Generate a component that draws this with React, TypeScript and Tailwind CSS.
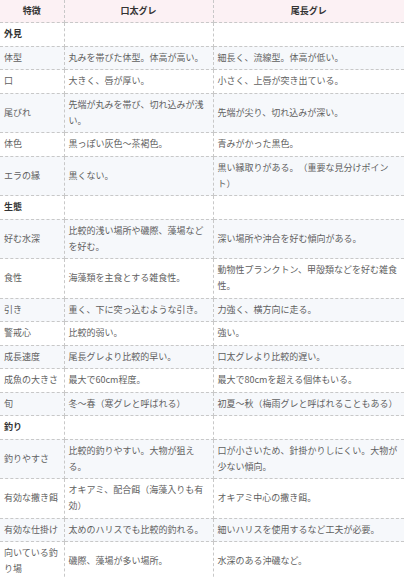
type Row = { label: string; a?: string; b?: string; section?: boolean };

const rows: Row[] = [
  { label: '外見', section: true },
  { label: '体型', a: '丸みを帯びた体型。体高が高い。', b: '細長く、流線型。体高が低い。' },
  { label: '口', a: '大きく、唇が厚い。', b: '小さく、上唇が突き出ている。' },
  { label: '尾びれ', a: '先端が丸みを帯び、切れ込みが浅い。', b: '先端が尖り、切れ込みが深い。' },
  { label: '体色', a: '黒っぽい灰色〜茶褐色。', b: '青みがかった黒色。' },
  { label: 'エラの縁', a: '黒くない。', b: '黒い縁取りがある。（重要な見分けポイント）' },
  { label: '生態', section: true },
  { label: '好む水深', a: '比較的浅い場所や磯際、藻場などを好む。', b: '深い場所や沖合を好む傾向がある。' },
  { label: '食性', a: '海藻類を主食とする雑食性。', b: '動物性プランクトン、甲殻類などを好む雑食性。' },
  { label: '引き', a: '重く、下に突っ込むような引き。', b: '力強く、横方向に走る。' },
  { label: '警戒心', a: '比較的弱い。', b: '強い。' },
  { label: '成長速度', a: '尾長グレより比較的早い。', b: '口太グレより比較的遅い。' },
  { label: '成魚の大きさ', a: '最大で60cm程度。', b: '最大で80cmを超える個体もいる。' },
  { label: '旬', a: '冬〜春（寒グレと呼ばれる）', b: '初夏〜秋（梅雨グレと呼ばれることもある）' },
  { label: '釣り', section: true },
  { label: '釣りやすさ', a: '比較的釣りやすい。大物が狙える。', b: '口が小さいため、針掛かりしにくい。大物が少ない傾向。' },
  { label: '有効な撒き餌', a: 'オキアミ、配合餌（海藻入りも有効）', b: 'オキアミ中心の撒き餌。' },
  { label: '有効な仕掛け', a: '太めのハリスでも比較的釣れる。', b: '細いハリスを使用するなど工夫が必要。' },
  { label: '向いている釣り場', a: '磯際、藻場が多い場所。', b: '水深のある沖磯など。' },
];

const cell = 'border border-dashed border-[#c8c8c8] px-1 py-[3.25px] align-middle';

export default function App() {
  return (
    <div className="w-[404px] h-[578px] overflow-hidden bg-white font-['Noto_Sans_CJK_JP','Noto_Sans',sans-serif] text-[9px] leading-4 text-[#5f5f5f] [text-spacing-trim:space-all]">
      <table className="w-[404px] table-fixed border-collapse">
        <colgroup>
          <col className="w-[64px]" />
          <col className="w-[149px]" />
          <col className="w-[191px]" />
        </colgroup>
        <thead>
          <tr className="bg-[#fcf1f4] font-bold text-[#333]">
            <th className={`${cell} border-t-0 border-l-0 py-[3px] text-center`}>特徴</th>
            <th className={`${cell} border-t-0 py-[3px] text-center`}>口太グレ</th>
            <th className={`${cell} border-t-0 border-r-0 py-[3px] text-center`}>尾長グレ</th>
          </tr>
        </thead>
        <tbody>
          {rows.map((r, i) => (
            <tr key={r.label} className={i % 2 === 1 ? 'bg-[#f6f8fb]' : 'bg-white'}>
              <td className={`${cell} border-l-0 ${r.section ? 'font-bold text-[#333]' : ''}`}>{r.label}</td>
              <td className={cell}>{r.a}</td>
              <td className={`${cell} border-r-0`}>{r.b}</td>
            </tr>
          ))}
        </tbody>
      </table>
    </div>
  );
}
